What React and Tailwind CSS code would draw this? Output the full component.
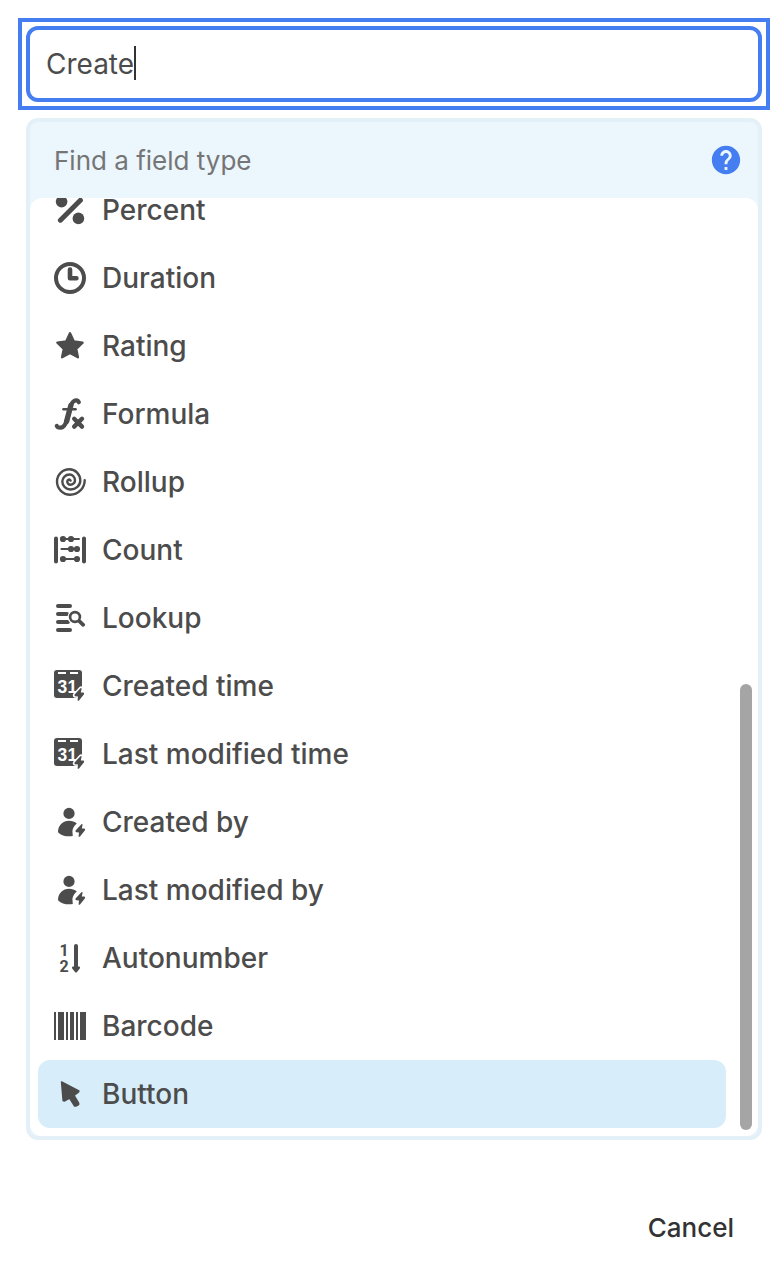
import React, { useState } from 'react';
import { MdHelp } from 'react-icons/md';

const Icon = ({ children }) => (
  <svg className="w-8 h-8 shrink-0 overflow-visible" viewBox="0 0 32 32" fill="currentColor" aria-hidden="true">
    {children}
  </svg>
);

const line = { fill: 'none', stroke: 'currentColor', strokeLinecap: 'round', strokeLinejoin: 'round' };

// small lightning bolt used for the automatic fields
const Bolt = ({ x = 0 }) => (
  <path transform={`translate(${x} 0)`} d="M27.4 18.2 L21.6 24.6 Q21 26 22.2 26.2 L25 26.4 L24.6 30.2 Q24.8 31.4 26 30.4 L31 24.2 Q31.4 22.8 30.2 22.6 L27.8 22.4 L28.6 18.8 Q28.4 17.4 27.4 18.2 Z" />
);

const PercentIcon = () => (
  <Icon>
    <path {...line} strokeWidth="5" d="M6.4 26.2 L26.4 6.2" />
    <circle cx="7.6" cy="7.6" r="5.8" />
    <circle cx="24.4" cy="24.4" r="5.8" />
  </Icon>
);

const DurationIcon = () => (
  <Icon>
    <circle {...line} strokeWidth="4" cx="16" cy="16" r="14" />
    <path {...line} strokeWidth="4.6" d="M16 7.6 V16.2 H22.4" />
  </Icon>
);

const RatingIcon = () => (
  <Icon>
    <path
      stroke="currentColor"
      strokeWidth="2.4"
      strokeLinejoin="round"
      d="M16 3.3 L19.8 11.4 L28.6 12.7 L22.2 18.9 L23.9 27.2 L16 23 L8.1 27.2 L9.8 18.9 L3.4 12.7 L12.2 11.4 Z"
    />
  </Icon>
);

const FormulaIcon = () => (
  <Icon>
    <path
      {...line}
      strokeWidth="4.2"
      d="M24.8 4.2 C23.8 2 21.8 2 20.2 2.8 C17.6 4 16.8 7.6 15.8 11.4 L13 22 C11.4 27 9.8 29.2 7 29.6 C5 29.8 3.4 29.4 2.8 28"
    />
    <path {...line} strokeWidth="5.4" d="M16.8 7.6 L12.6 23.4" />
    <path {...line} strokeWidth="2.4" d="M9.4 11.2 H21.6" />
    <path {...line} strokeWidth="4.4" d="M20.2 20.8 L28 28.6 M28 20.8 L20.2 28.6" />
  </Icon>
);

const RollupIcon = () => (
  <Icon>
    <path
      {...line}
      strokeWidth="2.4"
      d="M30.7 14.2 A14.5 14.5 0 0 1 16.2 28.7 A13.2 13.2 0 0 1 3 15.5 A12.4 12.2 0 0 1 15.4 3.3 A10.9 11.2 0 0 1 26.3 14.5 A9.8 9 0 0 1 16.5 23.5 A8.2 7.9 0 0 1 8.3 15.6 A7.2 7.1 0 0 1 15.5 8.5 A5.5 6 0 0 1 21 14.5 A4.6 4.2 0 0 1 16.4 18.7 A3.1 3 0 0 1 13.3 15.7 A2.2 2.2 0 0 1 15.5 13.5 L16.6 14.6"
    />
  </Icon>
);

const CountIcon = () => (
  <Icon>
    <path {...line} strokeWidth="4" d="M2 4.6 V27.4 M30 4.6 V27.4" />
    <path {...line} strokeWidth="2" d="M7.4 5 H25 M7.4 15 H25 M7.4 25 H25" />
    <circle cx="9" cy="5" r="3.1" />
    <circle cx="17" cy="5" r="3.1" />
    <circle cx="17" cy="15" r="3.1" />
    <circle cx="23" cy="15" r="3.1" />
    <circle cx="9" cy="25" r="3.1" />
    <circle cx="23" cy="25" r="3.1" />
  </Icon>
);

const LookupIcon = () => (
  <Icon>
    <path {...line} strokeWidth="4" d="M4 4 H16 M4 12 H13 M4 20 H14 M4 28 H16" />
    <circle cx="21" cy="15" r="7.4" fill="#ffffff" />
    <circle {...line} strokeWidth="2.6" cx="21" cy="15" r="4.9" />
    <path {...line} strokeWidth="3.8" d="M25.6 19.4 L29.2 22.8" />
  </Icon>
);

const DateBoltIcon = () => (
  <Icon>
    <rect width="28" height="28" rx="3" />
    <path d="M4 2 H12 V4 H4 Z M16 2 H24 V4 H16 Z" fill="#ffffff" />
    <text x="3.6 13.6" y="23" fontSize="17.5" fontWeight="700" fill="#ffffff" className="font-['Liberation_Sans',sans-serif]">31</text>
    <g stroke="#ffffff" strokeWidth="3.2" fill="#ffffff">
      <Bolt x={-1} />
    </g>
    <Bolt x={-1} />
  </Icon>
);

const UserBoltIcon = () => (
  <Icon>
    <circle cx="15" cy="7.4" r="5.6" />
    <path d="M4 25.4 C4.4 19 9 14.8 15 14.8 C18 14.8 20.8 15.8 22.8 17.4 C20 19.6 18.6 22.4 18.4 25.2 L18.8 30 C13 31 7.6 29.6 4.2 26.4 Z" />
    <Bolt />
  </Icon>
);

const AutonumberIcon = () => (
  <Icon>
    <g fontSize="16" fontWeight="700" className="font-['Roboto',sans-serif]">
      <text x="10" y="14" textAnchor="middle">1</text>
      <text x="10" y="30" textAnchor="middle">2</text>
    </g>
    <path {...line} strokeWidth="4" d="M22 4 V26" />
    <path d="M18.6 24.4 H25.4 Q26.6 25.4 25.8 26.4 L22.8 30.2 Q22 31 21.2 30.2 L18.2 26.4 Q17.4 25.4 18.6 24.4 Z" />
  </Icon>
);

const BarcodeIcon = () => (
  <Icon>
    <rect x="0" y="2" width="2" height="28" />
    <rect x="4" y="2" width="6" height="28" />
    <rect x="12" y="2" width="2" height="28" />
    <rect x="16" y="2" width="4" height="28" />
    <rect x="22" y="2" width="2" height="28" />
    <rect x="26" y="2" width="6" height="28" />
  </Icon>
);

const ButtonIcon = () => (
  <Icon>
    <path
      stroke="currentColor"
      strokeWidth="1.6"
      strokeLinejoin="round"
      d="M7.6 4 L24.8 13 L24.6 13.8 L20 17.4 L24.6 25.2 Q25 26.2 24.2 26.8 L21.8 28 Q20.8 28.2 20.2 27.4 L15.6 20 L10.2 23 L9.2 22.6 Z"
    />
  </Icon>
);

const fields = [
  { name: 'Percent', icon: PercentIcon },
  { name: 'Duration', icon: DurationIcon },
  { name: 'Rating', icon: RatingIcon },
  { name: 'Formula', icon: FormulaIcon },
  { name: 'Rollup', icon: RollupIcon },
  { name: 'Count', icon: CountIcon },
  { name: 'Lookup', icon: LookupIcon },
  { name: 'Created time', icon: DateBoltIcon },
  { name: 'Last modified time', icon: DateBoltIcon },
  { name: 'Created by', icon: UserBoltIcon },
  { name: 'Last modified by', icon: UserBoltIcon },
  { name: 'Autonumber', icon: AutonumberIcon },
  { name: 'Barcode', icon: BarcodeIcon },
  { name: 'Button', icon: ButtonIcon },
];

const App = () => {
  const [name, setName] = useState('Create');
  const [selected, setSelected] = useState('Button');

  return (
    <div className="min-h-screen bg-white pt-[18px] pl-[18px] pr-[14px] pb-6 font-['Inter',sans-serif] text-[#4c4c4c]">
      <div className="border-4 border-[#457ef0] p-1">
        <div className="relative">
          <input
            type="text"
            aria-label="Field name"
            value={name}
            onChange={(e) => setName(e.target.value)}
            className="block w-full h-[76px] px-4 rounded-xl border-4 border-[#457ef0] bg-white text-[28px] outline-none"
          />
          <span className="absolute left-[108px] top-5 w-0.5 h-[34px] bg-[#333333]" />
        </div>
      </div>

      <div className="relative mt-2 mx-2 rounded-xl border-4 border-[#e4f0f7] bg-[#ebf6fd] overflow-hidden">
        <div className="flex items-center h-[76px] pl-6 pr-[15px]">
          <input
            type="text"
            aria-label="Find a field type"
            placeholder="Find a field type"
            className="flex-1 min-w-0 bg-transparent text-[26px] placeholder:text-[#757575] outline-none"
          />
          <button type="button" aria-label="Help" className="text-[#457ef0]">
            <MdHelp className="w-[34px] h-[34px]" />
          </button>
        </div>

        <div className="rounded-xl bg-white overflow-hidden pb-2">
          {/* scrolled to the end, so the first row is cut off */}
          <ul className="-mt-[22px] ml-2 mr-8">
            {fields.map(({ name: label, icon: FieldIcon }) => (
              <li key={label}>
                <button
                  type="button"
                  onClick={() => setSelected(label)}
                  className={`flex items-center gap-4 w-full h-[68px] px-4 rounded-xl text-[28px] font-[550] text-left ${
                    selected === label ? 'bg-[#d7eefa]' : ''
                  }`}
                >
                  <FieldIcon />
                  <span>{label}</span>
                </button>
              </li>
            ))}
          </ul>
        </div>

        <div className="absolute right-1.5 bottom-1.5 w-3 h-[446px] rounded-full bg-[#a5a5a5]" />
      </div>

      <div className="flex justify-end mt-16 pr-9">
        <button type="button" className="h-[46px] text-[26px] font-medium text-[#333333]">Cancel</button>
      </div>
    </div>
  );
};

export default App;
